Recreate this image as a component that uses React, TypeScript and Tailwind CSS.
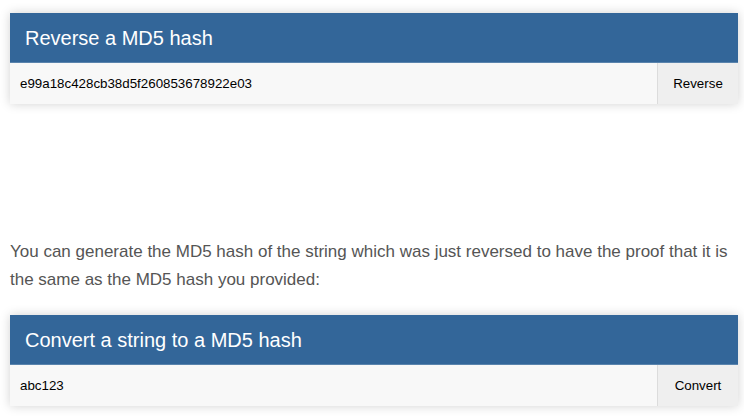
import React from 'react'

function HashCard({ title, value, action }: { title: string; value: string; action: string }) {
    return (
        <div className="bg-white shadow-[0_0_10px_rgba(0,0,0,0.18)]">
            <div className="h-[50px] bg-[#336699] flex items-center pl-[15px] border-b border-[#5a84ad]">
                <h2 className="text-[20px] text-white leading-none">{title}</h2>
            </div>
            <div className="flex h-[41px]">
                <div className="flex-1 bg-[#f8f8f8] flex items-center pl-[10px] pt-px text-[13.33px] text-black">{value}</div>
                <button className="w-[81px] bg-[#efefef] border-l border-[#dcdcdc] pt-px text-[13.33px] text-black">{action}</button>
            </div>
        </div>
    )
}

export default function App() {
    return (
        <div className="w-[744px] h-[418px] bg-white overflow-hidden pl-[10px] pr-[6px] pt-[13px] font-['Liberation_Sans',Arial,sans-serif]">
            <HashCard title="Reverse a MD5 hash" value="e99a18c428cb38d5f260853678922e03" action="Reverse" />
            <p className="mt-[134px] text-[17px] leading-[28px] text-[#555]">
                You can generate the MD5 hash of the string which was just reversed to have the proof that it is the same as the MD5 hash you provided:
            </p>
            <div className="mt-[21px]">
                <HashCard title="Convert a string to a MD5 hash" value="abc123" action="Convert" />
            </div>
        </div>
    )
}
